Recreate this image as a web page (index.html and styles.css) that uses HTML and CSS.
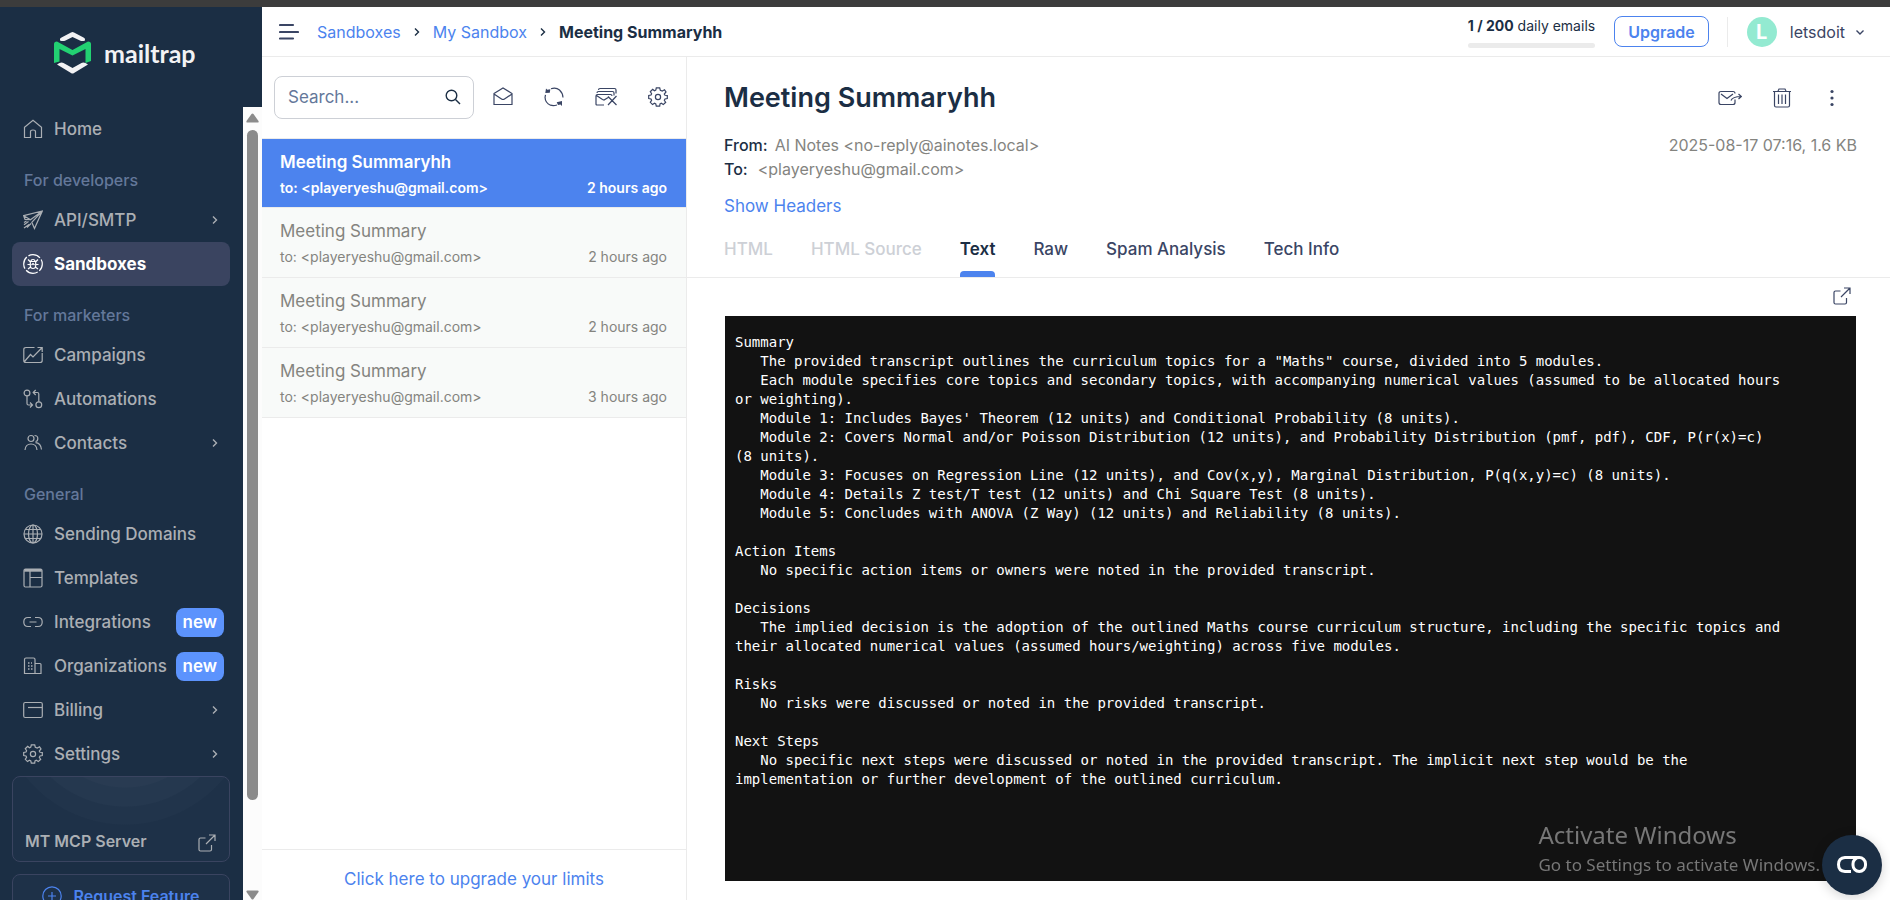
FILE: index.html
```html
<!DOCTYPE html>
<html lang="en">
<head>
<meta charset="utf-8">
<meta name="viewport" content="width=device-width, initial-scale=1">
<title>Meeting Summaryhh - Mailtrap</title>
<link rel="stylesheet" href="styles.css">
</head>
<body>
<div class="window-edge"></div>
<div class="app">
  <aside class="sidebar">
    <a class="brand" href="#" aria-label="mailtrap">
      <svg class="brand-mark" viewBox="0 0 37 42">
        <path d="M6 7Q6 6 7.500 5.500L17 .5Q18.500-.3 20 .5L29.500 5.500Q31 6 31 7.500V8.500Q28 9.500 26 8.500L18.500 5 11.500 8.500Q9 9.500 6 8.500Z" fill="#f2f2f4"/>
        <path d="M0 12Q0 9.500 3 9.500L18.500 18 34 9.500Q37 9.500 37 12V29L31.500 31V17L18.500 23.500 5.500 17V29.500L0 31Z" fill="#22d172"/>
        <path d="M3 32.500Q7 29.500 9.500 31L18.500 36 27.500 31Q30 29.500 34 32.500L20 41Q18.500 42 17 41Z" fill="#f2f2f4"/>
      </svg>
      <span class="brand-name">mailtrap</span>
    </a>
    <div class="sidebar-body">
      <div class="sidebar-content">
        <nav class="nav">
          <a class="nav-item" href="#"><svg class="icon" viewBox="0 0 20 20"><path d="M1.500 8.200V18.500H7.500V12.500Q7.500 11 10 11T12.500 12.500V18.500H18.500V8.200L10 1.300Z"/></svg>Home</a>
          <h2 class="nav-label">For developers</h2>
          <a class="nav-item" href="#"><svg class="icon" viewBox="0 0 20 20"><path d="M.7 5.700 19.300 1 11.500 18.500 8.800 12.300 19 1.300 7.500 9.700ZM.7 5.700 2 9.500 7.500 9.700M5.500 11.500 1 14.800M8 13.500 4 17.500M3.500 11 1 12.500M6 14.500 1 18"/></svg>API/SMTP<svg class="chevron" viewBox="0 0 10 10"><path d="M3 1.500 6.500 5 3 8.500"/></svg></a>
          <a class="nav-item nav-item-active" href="#"><svg class="icon" viewBox="0 0 20 20"><circle cx="10" cy="10" r="9.300" stroke-dasharray="12.600 2" stroke-dashoffset="5"/><path d="M7.300 7.500H12.700V12Q12.500 14.500 10 14.500T7.300 12ZM8 7.500Q8 5.500 10 5.500T12 7.500M8.500 11 10 9.500 11.500 11M4.500 10.500H7.300M12.700 10.500H15.500M5 5.500 7.500 8M15 5.500 12.500 8M5 15 7.700 13M15 15 12.300 13"/></svg>Sandboxes</a>
          <h2 class="nav-label">For marketers</h2>
          <a class="nav-item" href="#"><svg class="icon" viewBox="0 0 20 20"><path d="M11.500 2.500H3Q.8 2.500.8 4.500V15.500Q.8 17.500 3 17.500H17Q19.200 17.500 19.200 15.500V8M1.500 16.500 7.500 9.500 10 12 18.700 3M14.500 2.500H19.200V7"/></svg>Campaigns</a>
          <a class="nav-item" href="#"><svg class="icon" viewBox="0 0 20 20"><circle cx="4" cy="4" r="2.900"/><circle cx="15.800" cy="15.800" r="2.900"/><path d="M4 7V14.500Q4 16 5.500 16H9M7 13.500 9.500 16 7 18.500M15.800 12.800V5Q15.800 3.500 14.300 3.500H10.500M12.700 1 10.200 3.500 12.700 6"/></svg>Automations</a>
          <a class="nav-item" href="#"><svg class="icon" viewBox="0 0 20 20"><circle cx="8" cy="5.500" r="3"/><path d="M2 17Q2.500 11 8 11T14 17M11.500 2.500Q14.800 2.500 14.800 5.500T12.500 8.500M12.500 9.700Q17.800 10 18.500 16.500"/></svg>Contacts<svg class="chevron" viewBox="0 0 10 10"><path d="M3 1.500 6.500 5 3 8.500"/></svg></a>
          <h2 class="nav-label">General</h2>
          <a class="nav-item" href="#"><svg class="icon" viewBox="0 0 20 20"><circle cx="10" cy="10" r="9"/><ellipse cx="10" cy="10" rx="4.500" ry="9"/><path d="M10 1V19M1 10H19M2.500 5.500H17.500M2.500 14.500H17.500"/></svg>Sending Domains</a>
          <a class="nav-item" href="#"><svg class="icon" viewBox="0 0 20 20"><rect x="1" y="1" width="18" height="18" rx="1.500"/><path d="M1 3H19M7 3.500V19M7 9.500H19"/><path d="M1.500 2.200H18.500" stroke-width="2.400"/></svg>Templates</a>
          <a class="nav-item" href="#"><svg class="icon" viewBox="0 0 20 20"><path d="M8 5.500H5Q.8 5.500.8 10T5 14.500H8M12 5.500H15Q19.200 5.500 19.200 10T15 14.500H12M6.500 10H13.500"/></svg>Integrations<span class="tag">new</span></a>
          <a class="nav-item" href="#"><svg class="icon" viewBox="0 0 20 20"><path d="M12 17.500H1.500V3.500Q1.500 2 3 2H10.500Q12 2 12 3.500ZM12 7.500H17Q18 7.500 18 8.500V17.500H12"/><path d="M5 7H9M5 10H10M5 13H10" stroke-width="1.600" stroke-dasharray="1.500 1.500"/></svg>Organizations<span class="tag">new</span></a>
          <a class="nav-item" href="#"><svg class="icon" viewBox="0 0 20 20"><rect x=".7" y="2.500" width="18.600" height="15" rx="1.500"/><path d="M5 7.500H19"/></svg>Billing<svg class="chevron" viewBox="0 0 10 10"><path d="M3 1.500 6.500 5 3 8.500"/></svg></a>
          <a class="nav-item" href="#"><svg class="icon" viewBox="0 0 20 20"><circle cx="10" cy="10" r="2.600"/><path d="M8.300 .8H11.700L12.300 3.200 14.300 4 16.500 2.800 18 5 16.300 7 17 8.300 19.300 8.500V11.500L17 12 16.300 13.300 17.700 15.300 15.300 17.600 13.300 16.300 12 17 11.700 19.200H8.300L7.800 17 6.500 16.300 4.500 17.600 2.300 15.300 3.600 13.300 3 12 .7 11.500V8.500L3 8 3.600 6.700 2.300 4.700 4.700 2.400 6.500 3.700 7.800 3.100Z"/></svg>Settings<svg class="chevron" viewBox="0 0 10 10"><path d="M3 1.500 6.500 5 3 8.500"/></svg></a>
        </nav>
        <a class="card mcp-card" href="#">MT MCP Server
          <svg class="icon" viewBox="0 0 20 20"><path d="M8.500 5H3.500Q2 5 2 6.500V16.500Q2 18 3.500 18H13Q14.500 18 14.500 16.500V12M9 11 18 2M12 2H18V8"/></svg>
        </a>
        <a class="card request-card" href="#">
          <svg class="icon" viewBox="0 0 20 20"><circle cx="10" cy="10" r="9.200"/><path d="M10 6V14M6 10H14"/></svg>Request Feature
        </a>
      </div>
      <div class="scrollbar" aria-hidden="true">
        <svg class="scroll-arrow" viewBox="0 0 13 10"><path d="M6.500 .5Q7 .5 7.500 1L12.500 8Q13 9.500 11.500 9.500H1.500Q0 9.500.5 8L5.500 1Q6 .5 6.500 .5Z"/></svg>
        <div class="scroll-track"><div class="scroll-thumb"></div></div>
        <svg class="scroll-arrow" viewBox="0 0 13 10"><path d="M6.500 9.500Q7 9.500 7.500 9L12.500 2Q13 .5 11.500 .5H1.500Q0 .5.5 2L5.500 9Q6 9.500 6.500 9.500Z"/></svg>
      </div>
    </div>
  </aside>

  <div class="workspace">
    <header class="topbar">
      <button class="icon-button menu-button" type="button" aria-label="Toggle menu"><svg class="icon" viewBox="0 0 20 20"><path d="M1 3H14M1 10H19M1 16.500H14" stroke-width="2.200" stroke-linecap="round"/></svg></button>
      <nav class="breadcrumbs" aria-label="Breadcrumb">
        <a href="#">Sandboxes</a>
        <svg class="chevron" viewBox="0 0 10 10"><path d="M3 1.500 6.500 5 3 8.500"/></svg>
        <a href="#">My Sandbox</a>
        <svg class="chevron" viewBox="0 0 10 10"><path d="M3 1.500 6.500 5 3 8.500"/></svg>
        <strong>Meeting Summaryhh</strong>
      </nav>
      <div class="usage"><div><b>1 / 200</b> daily emails</div><div class="usage-bar"></div></div>
      <button class="upgrade" type="button">Upgrade</button>
      <button class="account" type="button"><span class="avatar">L</span>letsdoit<svg class="chevron" viewBox="0 0 10 10"><path d="M1.500 3.500 5 7 8.500 3.500"/></svg></button>
    </header>

    <div class="panes">
      <section class="inbox">
        <div class="inbox-tools">
          <label class="search">
            <input type="search" placeholder="Search..." aria-label="Search">
            <svg class="search-icon" viewBox="0 0 16 16"><circle cx="6.500" cy="6.500" r="5.300"/><path d="M10.500 10.500 15 15"/></svg>
          </label>
          <button class="icon-button" type="button" aria-label="Mark all as read"><svg class="icon" viewBox="0 0 20 20"><path d="M1 6.500 10 1 19 6.500V17.500H1ZM1 7 8.500 12Q10 13 11.500 12L19 7"/></svg></button>
          <button class="icon-button" type="button" aria-label="Refresh"><svg class="icon" viewBox="0 0 20 20"><path d="M1 10Q1.200 16 6.500 18.200 9.500 19 13 18M4.500 3.500H3.800M7 1.800Q12 .2 15.500 3 18.800 6 19 10.500M1.500 7.800 1 10.500"/><path d="M2 1.500 3.300 2.700 6.300 2.200 5.800 5.700 1.300 6ZM12.700 15.300 18 14 18 19 16.500 17.500 14 18Z" fill="currentColor" stroke="none"/></svg></button>
          <button class="icon-button" type="button" aria-label="Clear inbox"><svg class="icon icon-wide" viewBox="0 0 22 20"><path d="M9 18H2Q1 18 1 17V9Q1 7.500 2.500 7.500H15.500Q17 7.500 17 9M1.500 8.500 7.500 12.500 9 13 14 10M2 6Q2 4.500 3.500 4.500H17.500Q19 4.500 19 6V8.500M3.500 3Q3.500 1.500 5 1.500H19.500Q21 1.500 21 3V6.500M13 9.500 21.500 18M21.500 9 13 18"/></svg></button>
          <button class="icon-button" type="button" aria-label="Inbox settings"><svg class="icon" viewBox="0 0 20 20"><circle cx="10" cy="10" r="2.600"/><path d="M8.300 .8H11.700L12.300 3.200 14.300 4 16.500 2.800 18 5 16.300 7 17 8.300 19.300 8.500V11.500L17 12 16.300 13.300 17.700 15.300 15.300 17.600 13.300 16.300 12 17 11.700 19.200H8.300L7.800 17 6.500 16.300 4.500 17.600 2.300 15.300 3.600 13.300 3 12 .7 11.500V8.500L3 8 3.600 6.700 2.300 4.700 4.700 2.400 6.500 3.700 7.800 3.100Z"/></svg></button>
        </div>
        <ul class="messages">
          <li><a class="message message-selected" href="#"><span class="message-subject">Meeting Summaryhh</span><span class="message-meta"><span>to: &lt;playeryeshu@gmail.com&gt;</span><time>2 hours ago</time></span></a></li>
          <li><a class="message" href="#"><span class="message-subject">Meeting Summary</span><span class="message-meta"><span>to: &lt;playeryeshu@gmail.com&gt;</span><time>2 hours ago</time></span></a></li>
          <li><a class="message" href="#"><span class="message-subject">Meeting Summary</span><span class="message-meta"><span>to: &lt;playeryeshu@gmail.com&gt;</span><time>2 hours ago</time></span></a></li>
          <li><a class="message" href="#"><span class="message-subject">Meeting Summary</span><span class="message-meta"><span>to: &lt;playeryeshu@gmail.com&gt;</span><time>3 hours ago</time></span></a></li>
        </ul>
        <footer class="inbox-footer"><a href="#">Click here to upgrade your limits</a></footer>
      </section>

      <main class="mail">
        <div class="mail-head">
          <div class="mail-title-row">
            <h1>Meeting Summaryhh</h1>
            <div class="mail-actions">
              <button class="icon-button" type="button" aria-label="Forward"><svg class="icon icon-forward" viewBox="0 0 24 20"><path d="M17 11.500V14.500Q17 16.500 15 16.500H3Q1 16.500 1 14.500V5.500Q1 3.500 3 3.500H15Q17 3.500 17 5.500M3 6 9 10.500 15 6M13 12.500Q14.500 8.700 23 8.500M20.500 6 23.300 8.500 20.500 11"/></svg></button>
              <button class="icon-button" type="button" aria-label="Delete"><svg class="icon" viewBox="0 0 20 20"><path d="M1 3.500H19M2.500 3.500V17.500Q2.500 19 4 19H16Q17.500 19 17.500 17.500V3.500M6 3 7 1H13L14 3M6.500 6.500V16M10 6.500V16M13.500 6.500V16"/></svg></button>
              <button class="icon-button" type="button" aria-label="More actions"><svg class="icon icon-dots" viewBox="0 0 20 20"><circle cx="10" cy="3.500" r="1.600"/><circle cx="10" cy="10" r="1.600"/><circle cx="10" cy="16.500" r="1.600"/></svg></button>
            </div>
          </div>
          <div class="mail-info">
            <div class="addresses">
              <div><b>From:</b><span>AI Notes &lt;no-reply@ainotes.local&gt;</span></div>
              <div><b>To:</b><span class="to-address">&lt;playeryeshu@gmail.com&gt;</span></div>
            </div>
            <div class="mail-date">2025-08-17 07:16, 1.6 KB</div>
          </div>
          <a class="show-headers" href="#">Show Headers</a>
          <div class="tabs" role="tablist">
            <button class="tab" role="tab" type="button" disabled>HTML</button>
            <button class="tab" role="tab" type="button" disabled>HTML Source</button>
            <button class="tab tab-active" role="tab" type="button" aria-selected="true">Text</button>
            <button class="tab" role="tab" type="button">Raw</button>
            <button class="tab" role="tab" type="button">Spam Analysis</button>
            <button class="tab" role="tab" type="button">Tech Info</button>
          </div>
        </div>
        <div class="mail-body">
          <button class="icon-button open-button" type="button" aria-label="Open in new window"><svg class="icon" viewBox="0 0 20 20"><path d="M8.500 5H3.500Q2 5 2 6.500V16.500Q2 18 3.500 18H13Q14.500 18 14.500 16.500V12M9 11 18 2M12 2H18V8"/></svg></button>
          <div class="text-view"><pre>Summary
   The provided transcript outlines the curriculum topics for a "Maths" course, divided into 5 modules.
   Each module specifies core topics and secondary topics, with accompanying numerical values (assumed to be allocated hours or weighting).
   Module 1: Includes Bayes' Theorem (12 units) and Conditional Probability (8 units).
   Module 2: Covers Normal and/or Poisson Distribution (12 units), and Probability Distribution (pmf, pdf), CDF, P(r(x)=c) (8&nbsp;units).
   Module 3: Focuses on Regression Line (12 units), and Cov(x,y), Marginal Distribution, P(q(x,y)=c) (8 units).
   Module 4: Details Z test/T test (12 units) and Chi Square Test (8 units).
   Module 5: Concludes with ANOVA (Z Way) (12 units) and Reliability (8 units).

Action Items
   No specific action items or owners were noted in the provided transcript.

Decisions
   The implied decision is the adoption of the outlined Maths course curriculum structure, including the specific topics and their allocated numerical values (assumed hours/weighting) across five modules.

Risks
   No risks were discussed or noted in the provided transcript.

Next Steps
   No specific next steps were discussed or noted in the provided transcript. The implicit next step would be the implementation or further development of the outlined curriculum.</pre></div>
        </div>
      </main>
    </div>
  </div>
</div>
<div class="watermark"><div class="watermark-title">Activate Windows</div><div>Go to Settings to activate Windows.</div></div>
<button class="chat" type="button" aria-label="Open support widget"><svg viewBox="0 0 30 18"><path d="M14 15.500H8Q1.500 15 1.500 8.500T8 1.500H22.500"/><rect x="16" y="1.500" width="12.500" height="14" rx="6.250"/></svg></button>
</body>
</html>
```
FILE: styles.css
```css
* {
  box-sizing: border-box;
}

body {
  margin: 0;
  height: 100vh;
  display: flex;
  flex-direction: column;
  overflow: hidden;
  background: #fff;
  color: #1b2e44;
  font-family: Inter, "Liberation Sans", sans-serif;
  font-size: 17px;
  line-height: 24px;
}

a {
  color: #4c83ee;
  text-decoration: none;
}

button {
  padding: 0;
  border: 0;
  background: none;
  color: inherit;
  font: inherit;
}

.icon,
.chevron,
.search-icon {
  flex: none;
  width: 20px;
  height: 20px;
  fill: none;
  stroke: currentColor;
  stroke-width: 1.2;
}

.icon-wide {
  width: 22px;
}

.icon-forward {
  width: 24px;
}

.icon-dots {
  fill: currentColor;
  stroke: none;
}

.chevron {
  width: 10px;
  height: 10px;
  stroke-width: 1.4;
}

.icon-button {
  display: flex;
  color: #3a4564;
}

.window-edge {
  flex: none;
  height: 7px;
  background: #3c3c3c;
}

.app {
  flex: 1;
  min-height: 0;
  display: flex;
}

/* Sidebar */

.sidebar {
  flex: none;
  width: 262px;
  display: flex;
  flex-direction: column;
  background: #1b2e44;
}

.brand {
  flex: none;
  height: 100px;
  padding: 0 0 8px 54px;
  display: flex;
  align-items: center;
  gap: 13px;
  color: #f2f2f4;
}

.brand-mark {
  width: 37px;
  height: 42px;
}

.brand-name {
  font-family: Lato, sans-serif;
  font-size: 25px;
  font-weight: 700;
}

.sidebar-body {
  flex: 1;
  min-height: 0;
  display: flex;
}

.sidebar-content {
  flex: 1;
  padding: 0 13px 0 12px;
  overflow: hidden;
}

.nav-item {
  height: 44px;
  padding: 0 6px 0 11px;
  display: flex;
  align-items: center;
  border-radius: 8px;
  color: #abafb4;
  font-weight: 500;
}

.nav-item .icon {
  margin-right: 11px;
}

.nav-item .chevron {
  margin: 0 4px 0 auto;
}

.nav-item-active {
  background: #3a4460;
  color: #fff;
  font-weight: 700;
}

.nav-label {
  height: 47px;
  margin: 0;
  padding: 17px 0 0 12px;
  color: #64789a;
  font-size: 16px;
  font-weight: 500;
}

.tag {
  margin-left: auto;
  padding: 2px 7px 3px;
  border-radius: 8px;
  background: #5c93fd;
  color: #fff;
  font-weight: 600;
}

.card {
  display: flex;
  border: 1px solid #3a4460;
  border-radius: 8px;
  background-color: #1e3148;
}

.mcp-card {
  height: 86px;
  margin-bottom: 12px;
  padding: 0 12px 8px;
  align-items: flex-end;
  justify-content: space-between;
  background-image: radial-gradient(circle at 52% -80px, #293b52 0 90px, #25384f 91px 109px, #21344b 110px 127px, transparent 128px);
  color: #abafb4;
  font-size: 16px;
  font-weight: 600;
}

.request-card {
  height: 44px;
  align-items: center;
  justify-content: center;
  gap: 11px;
  color: #4c83ee;
  font-size: 16px;
  font-weight: 600;
}

.scrollbar {
  width: 19px;
  padding: 6px 0 0;
  display: flex;
  flex-direction: column;
  align-items: center;
  gap: 7px;
  background: #fcfcfc;
}

.scroll-arrow {
  flex: none;
  width: 13px;
  height: 10px;
  fill: #8b8b8b;
}

.scroll-track {
  flex: 1;
}

.scroll-thumb {
  width: 11px;
  height: 89%;
  border-radius: 6px;
  background: #8b8b8b;
}

/* Top bar */

.workspace {
  flex: 1;
  min-width: 0;
  display: flex;
  flex-direction: column;
}

.topbar {
  flex: none;
  height: 50px;
  padding: 0 25px 0 17px;
  display: flex;
  align-items: center;
  border-bottom: 1px solid #ebebeb;
}

.menu-button {
  margin-right: 18px;
}

.breadcrumbs {
  margin-right: auto;
  display: flex;
  align-items: center;
  gap: 11px;
  font-size: 16px;
}

.breadcrumbs strong {
  font-weight: 700;
}

.usage {
  margin-right: 19px;
  font-size: 14px;
  line-height: 20px;
}

.usage b {
  font-weight: 700;
}

.usage-bar {
  height: 5px;
  margin-top: 7px;
  border-radius: 3px;
  background: #ebebeb;
}

.upgrade {
  height: 31px;
  margin-right: 18px;
  padding: 0 13px;
  border: 1px solid #4c83ee;
  border-radius: 8px;
  color: #4c83ee;
  font-size: 16px;
  font-weight: 600;
}

.account {
  padding-left: 19px;
  display: flex;
  align-items: center;
  border-left: 1px solid #ebebeb;
  color: #3a4564;
  font-size: 16px;
  line-height: 30px;
}

.account .chevron {
  margin-left: 10px;
}

.avatar {
  width: 30px;
  height: 30px;
  margin-right: 13px;
  border-radius: 50%;
  background: #93ead1;
  color: #fff;
  font-size: 20px;
  font-weight: 700;
}

/* Inbox */

.panes {
  flex: 1;
  min-height: 0;
  display: flex;
}

.inbox {
  flex: none;
  width: 425px;
  display: flex;
  flex-direction: column;
  border-right: 1px solid #ebebeb;
}

.inbox-tools {
  height: 82px;
  padding: 0 18px 1px 12px;
  display: flex;
  align-items: center;
  gap: 31px;
  border-bottom: 1px solid #ebebeb;
}

.search {
  width: 200px;
  height: 43px;
  margin-right: auto;
  padding: 0 12px 0 13px;
  display: flex;
  align-items: center;
  border: 1px solid #cdd0d6;
  border-radius: 8px;
}

.search + .icon-button {
  margin-left: -31px;
}

.search input {
  flex: 1;
  min-width: 0;
  padding: 0;
  border: 0;
  outline: 0;
  background: none;
  color: #1b2e44;
  font: inherit;
}

.search input::placeholder {
  color: #64789a;
}

.search-icon {
  width: 16px;
  height: 16px;
  stroke-width: 1.4;
}

.messages {
  flex: 1;
  margin: 0;
  padding: 0;
  list-style: none;
}

.message {
  height: 70px;
  padding: 11px 19px 0 18px;
  display: block;
  border-bottom: 1px solid #ebebeb;
  background: #f8faf9;
  color: #84847f;
}

.message-selected {
  height: 69px;
  background: #4c83ee;
  color: #fff;
  font-weight: 600;
}

.message-subject {
  display: block;
}

.message-meta {
  margin-top: 2px;
  display: flex;
  justify-content: space-between;
  font-size: 14px;
}

.inbox-footer {
  height: 51px;
  padding-top: 17px;
  border-top: 1px solid #ebebeb;
  text-align: center;
}

/* Mail */

.mail {
  flex: 1;
  min-width: 0;
  display: flex;
  flex-direction: column;
}

.mail-head {
  flex: none;
  padding: 21px 33px 0 37px;
  border-bottom: 1px solid #ebebeb;
}

.mail-title-row {
  display: flex;
  align-items: center;
  justify-content: space-between;
}

h1 {
  margin: 0;
  font-size: 27px;
  font-weight: 600;
  line-height: 40px;
}

.mail-actions {
  padding-right: 15px;
  display: flex;
  gap: 30px;
}

.mail-info {
  margin-top: 15px;
  display: flex;
  justify-content: space-between;
  color: #84847f;
  font-size: 16px;
}

.addresses b {
  margin-right: 7px;
  color: #1b2e44;
  font-weight: 500;
}

.to-address {
  margin-left: 3px;
}

.show-headers {
  margin-top: 13px;
  display: inline-block;
}

.tabs {
  margin-top: 19px;
  display: flex;
  gap: 38px;
}

.tab {
  height: 40px;
  padding-bottom: 16px;
  display: block;
  color: #3a4564;
  font-size: 17px;
  font-weight: 500;
}

.tab:disabled {
  padding-bottom: 20px;
  color: #cdd0d6;
}

.tab-active {
  position: relative;
  color: #1b2e44;
  font-weight: 600;
}

.tab-active::after {
  content: "";
  position: absolute;
  right: 0;
  bottom: 0;
  left: 0;
  height: 6px;
  border-radius: 4px 4px 0 0;
  background: #4c83ee;
}

.mail-body {
  flex: 1;
  min-height: 0;
  padding: 8px 34px 19px 38px;
  display: flex;
  flex-direction: column;
}

.open-button {
  margin: 0 4px 10px 0;
  align-self: flex-end;
}

.text-view {
  flex: 1;
  min-height: 0;
  padding: 17px 10px;
  background: #121212;
  color: #fff;
  overflow: hidden;
}

pre {
  max-width: 126ch;
  margin: 0;
  font-family: "DejaVu Sans Mono", monospace;
  font-size: 14px;
  line-height: 19px;
  white-space: pre-wrap;
}

/* Overlays */

.watermark {
  position: fixed;
  right: 70px;
  bottom: 22px;
  color: #777;
  font-family: "Noto Sans", sans-serif;
  font-size: 17px;
  line-height: 26px;
  pointer-events: none;
}

.watermark-title {
  font-size: 24px;
  line-height: 34px;
}

.chat {
  position: fixed;
  right: 8px;
  bottom: 5px;
  width: 60px;
  height: 60px;
  display: flex;
  align-items: center;
  justify-content: center;
  border-radius: 50%;
  background: #1b2e44;
  box-shadow: 0 2px 12px rgb(0 0 0 / 18%);
}

.chat svg {
  width: 30px;
  height: 18px;
  fill: none;
  stroke: #fff;
  stroke-width: 3;
}
```
